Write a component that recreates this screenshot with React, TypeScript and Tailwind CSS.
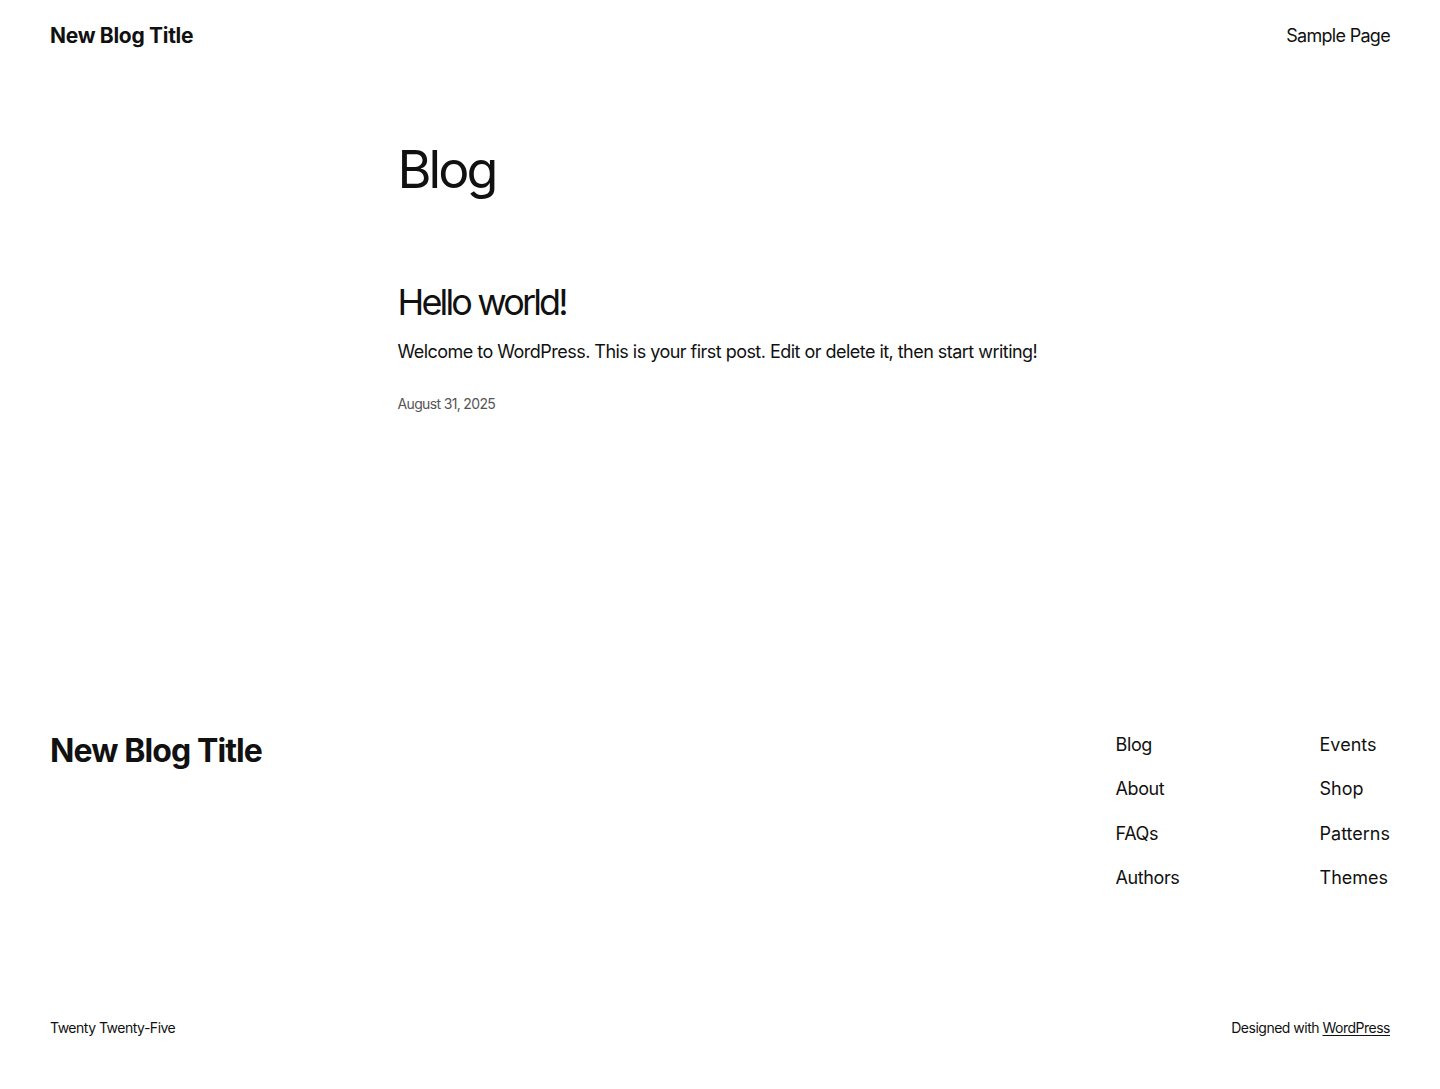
import React from "react";

const font = { fontFamily: "Inter, 'Noto Sans', sans-serif" };

export default function App() {
  return (
    <div className="w-full min-h-[1089px] bg-white text-[#111111]" style={font}>
      <header className="h-[70px] px-[50px] flex items-center justify-between">
        <a className="text-[21px] font-bold tracking-[-0.3px] leading-none">New Blog Title</a>
        <nav className="text-[18px] tracking-[-0.7px] leading-none pt-[2px]">Sample Page</nav>
      </header>
      <main className="h-[661px]">
        <div className="w-[645px] mx-auto pt-[69px]">
          <h1 className="text-[52px] leading-[62px] font-normal tracking-[-2.9px]">Blog</h1>
          <article className="mt-[80px]">
            <h2 className="text-[36px] leading-[43px] font-normal tracking-[-2.85px]">Hello world!</h2>
            <p className="mt-[13px] text-[18px] leading-[29px] tracking-[-0.53px] whitespace-nowrap">
              Welcome to WordPress. This is your first post. Edit or delete it, then start writing!
            </p>
            <div className="mt-[28px] text-[14px] leading-[20px] text-[#555555] tracking-[-0.65px]">August 31, 2025</div>
          </article>
        </div>
      </main>
      <footer className="px-[50px]">
        <div className="h-[287px] flex justify-between items-start">
          <div className="text-[32px] leading-[38px] font-bold tracking-[-0.9px] pt-[1px]">New Blog Title</div>
          <div className="flex">
            <ul className="w-[204px] flex flex-col gap-[17.3px] text-[18px] leading-[27px] tracking-[-0.4px]">
              <li>Blog</li>
              <li>About</li>
              <li>FAQs</li>
              <li>Authors</li>
            </ul>
            <ul className="flex flex-col gap-[17.3px] text-[18px] leading-[27px] tracking-[0px]">
              <li>Events</li>
              <li>Shop</li>
              <li>Patterns</li>
              <li>Themes</li>
            </ul>
          </div>
        </div>
        <div className="h-[20px] flex justify-between items-center text-[14px] leading-[20px] tracking-[-0.5px]">
          <span>Twenty Twenty-Five</span>
          <span>
            Designed with <a className="underline underline-offset-2">WordPress</a>
          </span>
        </div>
      </footer>
    </div>
  );
}
